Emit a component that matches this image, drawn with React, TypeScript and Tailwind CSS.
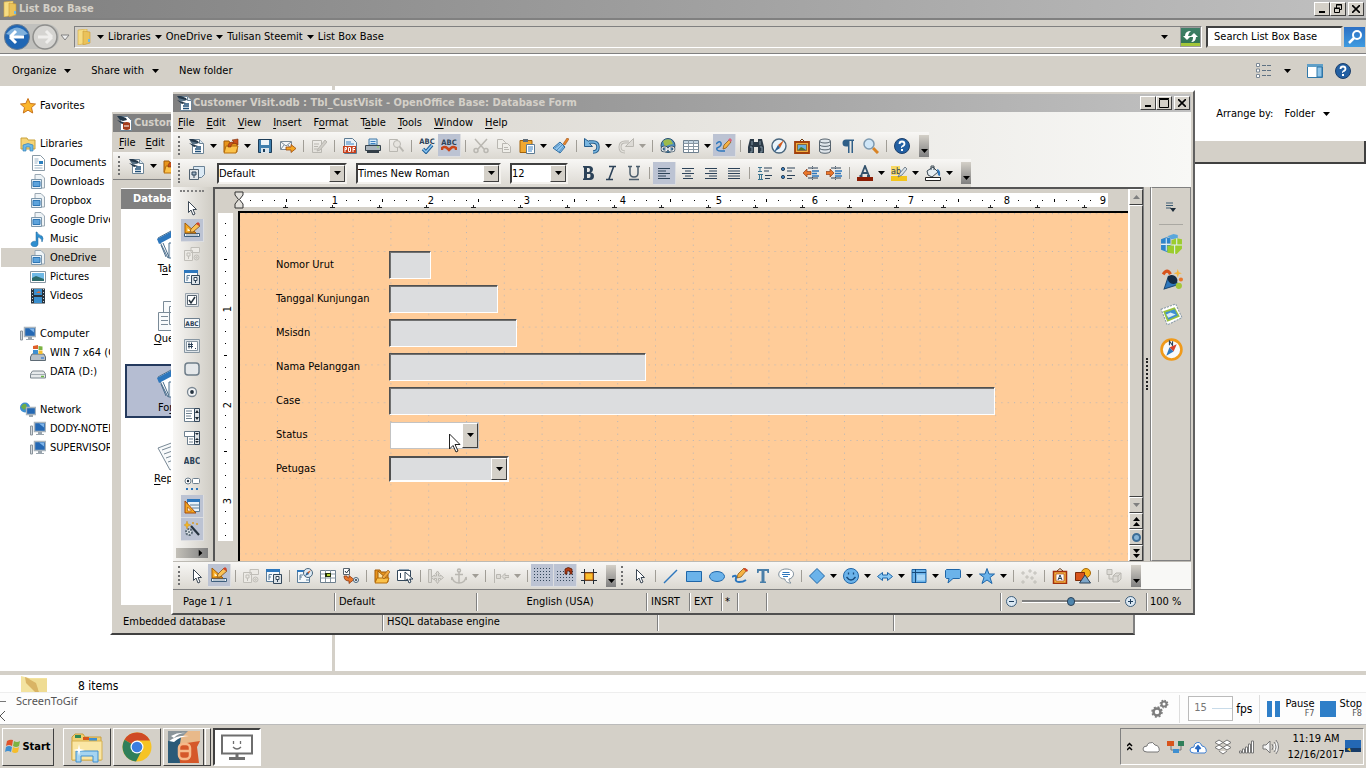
import React from "react";

const blue = "#3b82c4";
const navy = "#2c4258";
const faded = "#b9b7b1";

// 16x16 glyphs used by the toolbars
const icons: Record<string, React.ReactNode> = {
  doc: (
    <>
      <path d="M3.500 1.500h7l4 4v10h-11z" fill="#fff" stroke="#6d8496" />
      <path d="M0 1h4l5 2 1 2-4 1-3-1z M0 5l6 2 3 1-4 1z" fill="#24384a" />
      <path d="M1 3l8 2-5 2z" fill="#5b7488" />
      <path d="M7 9h5M6 11h6M6 13.500h6" stroke="#1f4f78" strokeWidth="1.300" />
      <path d="M10.500 1.500v4h4" fill="#dce8f1" stroke="#6d8496" />
    </>
  ),
  base: (
    <>
      <path d="M3.500 1.500h7l4 4v10h-11z" fill="#fff" stroke="#6d8496" />
      <path d="M0 1h4l5 2 1 2-4 1-3-1z M0 5l6 2 3 1-4 1z" fill="#24384a" />
      <path d="M6 8q4-2 7 0v6q-3 2-7 0z" fill="#a33c1b" />
      <path d="M7 11h5" stroke="#fff" />
    </>
  ),
  open: (
    <>
      <path d="M1 3h5l1 2h7v9H1z" fill="#e8951c" stroke="#a25a06" />
      <path d="M3 8h12l-2 7H1z" fill="#fbc24a" stroke="#b66d0b" />
      <path d="M5 9c0-4 2-5 6-5L9 2l6-1v6l-2-1.500c-4-.5-5 1-5 3.500z" fill="#c9501a" stroke="#7a2f0b" strokeWidth=".6" />
    </>
  ),
  save: (
    <>
      <path d="M1.500 1.500h13v13h-13z" fill="#3f7fae" stroke="#1c3c58" />
      <path d="M4 2h8v5H4z" fill="#eef4f8" />
      <path d="M4 10h8v5H4z" fill="#dbe5ec" />
      <path d="M6 11h2v3H6z" fill="#1c3c58" />
    </>
  ),
  mail: (
    <>
      <path d="M.5 3.500h11v8H.5z" fill="#f4f7fa" stroke="#7a8a97" />
      <path d="M1 4l5 4 5-4M1 11l3-4M11 11L8 7" stroke="#7a8a97" fill="none" />
      <path d="M6 9h5V6.500l5 4-5 4V12H6z" fill="#f5a623" stroke="#9c4a0c" strokeWidth=".8" />
    </>
  ),
  edit: (
    <g stroke={faded} fill="none">
      <path d="M1.500 2.500h9v12h-9zM3 6h5M3 8.500h4M3 11h4" />
      <path d="M7 11L14 2l2 2-7 8-3 1z" fill="#d0cec8" />
    </g>
  ),
  pdf: (
    <>
      <path d="M2.500.5h8l4 4v11h-12z" fill="#eaf2f8" stroke="#5d7b93" />
      <path d="M4 4h5M4 6h8" stroke="#3b82c4" />
      <path d="M1 8h13v7H1z" fill="#c8401c" />
      <path d="M3 14V9.500h1.500v2H3M6.500 9.500v4h2v-4zM11 14V9.500h2M11 11.500h2" stroke="#fff" fill="none" />
    </>
  ),
  print: (
    <>
      <path d="M4 1h8v6H4z" fill="#d9ebf8" stroke="#3f78a8" />
      <path d="M5.500 3.500h5M5.500 5.500h5" stroke="#3b82c4" />
      <path d="M.5 7.500h15v5H.5z" fill="#aab4bc" stroke="#36434d" />
      <path d="M2 12h12v3H2z" fill="#333e47" />
      <path d="M12 9h2" stroke="#8ee05a" />
    </>
  ),
  preview: (
    <g stroke={faded} fill="none">
      <path d="M1.500 1.500h8v12h-8z" />
      <circle cx="9" cy="6" r="3.500" fill="#e6e4df" />
      <path d="M11.500 8.500l4 5" strokeWidth="2" />
    </g>
  ),
  check: (
    <>
      <text x="8" y="6" fontSize="7.500" fontWeight="bold" textAnchor="middle" fill={navy}>ABC</text>
      <path d="M4 11l3 3 6-7" fill="none" stroke="#1d5f99" strokeWidth="3.500" />
      <path d="M4 11l3 3 6-7" fill="none" stroke="#8cc6f2" strokeWidth="1.500" />
    </>
  ),
  abc: (
    <>
      <text x="8" y="8" fontSize="7.500" fontWeight="bold" textAnchor="middle" fill={navy}>ABC</text>
      <path d="M1 13v-2q3-2 5 0l2 2 2-2q2-2 5 0v2" fill="none" stroke="#c9461a" strokeWidth="2.500" />
    </>
  ),
  cut: (
    <g stroke={faded} fill="none" strokeWidth="1.500">
      <path d="M2 1l9 10M14 1L5 11" />
      <circle cx="3" cy="12.500" r="2" />
      <circle cx="13" cy="12.500" r="2" />
    </g>
  ),
  copy: (
    <g stroke={faded} fill="#efeee9">
      <path d="M1.500 1.500h5l3 3v6h-8z" />
      <path d="M6.500 5.500h5l3 3v6h-8z" />
      <path d="M8 9.500h4M8 11.500h5" />
    </g>
  ),
  paste: (
    <>
      <path d="M1 2.500h12v12H1z" fill="#f0a830" stroke="#a3630b" />
      <path d="M4 1h5v3H4z" fill="#5c6b78" />
      <path d="M7.500 6.500h8v9h-8z" fill="#fff" stroke="#5d7b93" />
      <path d="M9 9h5M9 11h5M9 13h4" stroke={blue} />
    </>
  ),
  brush: (
    <>
      <path d="M10 6l4-6 2 1-4 6z" fill="#e8862a" stroke="#8d430a" strokeWidth=".5" />
      <path d="M7 4l5 5-5 6-7-5z" fill="#8fc4ec" stroke="#2d6da3" />
      <path d="M2 10l5-4M4 12l5-5M6 14l5-6" stroke="#2d6da3" strokeWidth=".6" />
    </>
  ),
  undo: (
    <>
      <path d="M5 4h4q5 0 5 5t-5 5" fill="none" stroke="#255d8c" strokeWidth="3.500" />
      <path d="M.5.5v8h8L5.500 5.500l1.500-2-3-.5z" fill="#7ab6e0" stroke="#255d8c" />
      <path d="M5 4h4q5 0 5 5t-5 5" fill="none" stroke="#7ab6e0" strokeWidth="1.500" />
    </>
  ),
  redo: (
    <>
      <path d="M11 4H7Q2 4 2 9t5 5" fill="none" stroke={faded} strokeWidth="3" />
      <path d="M11 4H7Q2 4 2 9t5 5" fill="none" stroke="#e4e2dd" strokeWidth="1.200" />
      <path d="M15.500.5v8h-8l3-3z" fill="#dddbd6" stroke={faded} />
    </>
  ),
  globe: (
    <>
      <circle cx="8" cy="7.500" r="7" fill="#4d8fc0" stroke="#29506f" />
      <path d="M3 3q4-3 8-1l2 4-5 1-3 2z" fill="#9dbb4a" />
      <g fill="none" stroke="#34495a" strokeWidth="2.600">
        <rect x="2" y="9" width="5" height="4" rx="2" />
        <rect x="9" y="9" width="5" height="4" rx="2" />
      </g>
      <g fill="none" stroke="#f2f5f7" strokeWidth="1.200">
        <rect x="2" y="9" width="5" height="4" rx="2" />
        <rect x="9" y="9" width="5" height="4" rx="2" />
        <path d="M5 11h6" />
      </g>
    </>
  ),
  table: (
    <>
      <path d="M.5 2.500h15v12H.5z" fill="#fff" stroke="#6d7f8e" />
      <path d="M1 3h14v2H1z" fill="#c4d5e2" />
      <path d="M.5 5.500h15M.5 8.500h15M.5 11.500h15M5.500 2v12M10.500 2v12" stroke="#8796a2" />
    </>
  ),
  draw: (
    <>
      <path d="M0 7q4-4 5-1t-4 5q-1 3 4 3h4" fill="none" stroke="#2d77bd" strokeWidth="1.500" />
      <path d="M7 12l1-4 5-5 2 2-5 6z" fill="#f6b244" stroke="#8d5a14" strokeWidth=".8" />
      <path d="M12 3l2-2 2 2-1 2z" fill="#d8657a" />
    </>
  ),
  find: (
    <>
      <path d="M2 1h4v3h4V1h4l2 8v6h-6V9H6v6H0V9z" fill="#2b3a47" />
      <path d="M2 9h2v5H2M12 9h2v5h-2M4 3v4M12 3v4" stroke="#8497a6" fill="none" />
    </>
  ),
  compass: (
    <>
      <circle cx="8" cy="8" r="7" fill="#eaf4fb" stroke="#49657c" strokeWidth="1.400" />
      <path d="M13 2L9 10 7 7z" fill="#d35a1d" />
      <path d="M3 14l4-7 2 3z" fill="#2b5f93" />
    </>
  ),
  gallery: (
    <>
      <path d="M5 4l3-3 3 3" stroke="#6b3a10" fill="none" />
      <path d="M1 4h14v11H1z" fill="#f0b040" stroke="#a3400c" strokeWidth="1.800" />
      <path d="M3.500 6.500h9v6h-9z" fill="#6bb0dd" stroke="#6b3a10" strokeWidth=".6" />
      <path d="M4 12l3-3 2 1 3 2z" fill="#4b7b2a" />
    </>
  ),
  db: (
    <g fill="#dfe5ea" stroke="#56636e">
      <path d="M2.500 3v10c0 3 11 3 11 0V3" />
      <ellipse cx="8" cy="3" rx="5.500" ry="2" />
      <path d="M2.500 6.500c0 2.500 11 2.500 11 0M2.500 10c0 2.500 11 2.500 11 0" fill="none" />
    </g>
  ),
  para: <path d="M14 1.500H6a3.500 3.500 0 0 0 0 7h2V15h1.500V3h2v12H13V3h1z" fill="#2f5f88" />,
  zoom: (
    <>
      <path d="M10 10l5 5" stroke="#d98324" strokeWidth="3" />
      <circle cx="6" cy="6" r="5" fill="#cfe6f7" stroke="#7c99b0" strokeWidth="1.500" />
    </>
  ),
  help: (
    <>
      <circle cx="8" cy="8" r="7.500" fill="#2360a3" stroke="#1c3f6b" />
      <path d="M5.500 6q0-2.500 2.500-2.500T10.500 6q0 1-1.500 2T8 9.500" fill="none" stroke="#fff" strokeWidth="1.800" />
      <path d="M7 11h2v2H7z" fill="#fff" />
    </>
  ),
  styles: (
    <>
      <path d="M4.500 1.500h11v8l-3 3h-8z" fill="#dbe9f4" stroke="#6b8296" />
      <path d="M.5 4.500h9v10h-9z" fill="#e3e6e8" stroke="#526270" />
      <path d="M3 7h4v3H3zM5 10v3" stroke="#2c4258" fill="#9fb4c4" />
    </>
  ),
  bold: <path d="M3 1h6q4 0 4 3.500 0 2-2 3 3 .5 3 3.500 0 4-4 4H3v-1.500h1v-11H3zM7 3v4h1.500Q10 7 10 5T8.500 3zm0 6v4h2q1.500 0 1.500-2T10 9z" fill={navy} fillRule="evenodd" />,
  italic: <path d="M6 1.500h7M3 14.500h7M10.500 2L6 14" stroke={navy} strokeWidth="1.600" />,
  underline: <path d="M2 1.500h4M10 1.500h4M4 2v6q0 4 4 4t4-4V2M3 14.500h10" fill="none" stroke="#4b5d6c" strokeWidth="1.500" />,
  left: <path d="M2 3.500h12M2 6h8M2 8.500h12M2 11h8M2 13.500h12" stroke={navy} />,
  center: <path d="M2 3.500h12M5 6h6M2 8.500h12M5 11h6M3 13.500h10" stroke={navy} />,
  right: <path d="M2 3.500h12M6 6h8M2 8.500h12M6 11h8M2 13.500h12" stroke={navy} />,
  justify: <path d="M2 3.500h12M2 6h12M2 8.500h12M2 11h12M2 13.500h12" stroke={navy} />,
  numbers: (
    <>
      <path d="M1 2.500h4M3 3v3M1 6.500h4M1 9.500h5M2.500 10v4M4.500 10v4M1 14.500h5" stroke="#3c7590" />
      <path d="M7 3h8M7 6h5M8 10.500h7M8 13.500h5" stroke={navy} />
    </>
  ),
  bullets: (
    <>
      <circle cx="3" cy="4" r="1.600" fill={blue} stroke={navy} />
      <circle cx="3" cy="12" r="1.600" fill={blue} stroke={navy} />
      <path d="M7 3h8M7 6h5M7 10.500h8M7 13.500h5" stroke={navy} />
    </>
  ),
  outdent: (
    <>
      <path d="M9.500 1v3M9.500 12v3" stroke="#526270" strokeDasharray="1 1" />
      <path d="M5 3h10M5 13h10" stroke={navy} />
      <path d="M9 6h7M9 8.500h5M9 11h7" stroke="#2d77bd" strokeWidth="1.500" />
      <path d="M0 8l4-4v2.500h4v3H4V12z" fill="#e9762a" stroke="#7d2c08" strokeWidth=".6" />
    </>
  ),
  indent: (
    <>
      <path d="M9.500 1v3M9.500 12v3" stroke="#526270" strokeDasharray="1 1" />
      <path d="M5 3h10M5 13h10" stroke={navy} />
      <path d="M9 6h7M9 8.500h6M9 11h7" stroke="#2d77bd" strokeWidth="1.500" />
      <path d="M8 8L4 4v2.500H0v3h4V12z" fill="#e9762a" stroke="#7d2c08" strokeWidth=".6" />
    </>
  ),
  color: (
    <>
      <path d="M4 11L8 1l4 10M5.500 8h5M2.500 11h3M10 11h3" fill="none" stroke="#33526c" strokeWidth="1.800" />
      <path d="M0 12h16v4H0z" fill="#8c1d04" />
    </>
  ),
  highlight: (
    <>
      <path d="M0 11h16v5H0z" fill="#f3c51c" />
      <path d="M0 1h9v9H0z" fill="#f7d864" />
      <text x="0" y="9" fontSize="9" fill={navy}>ab</text>
      <path d="M7 12l2-4 5-6 2 2-5 6z" fill="#d9e2e9" stroke="#5a6a77" strokeWidth=".8" />
    </>
  ),
  bucket: (
    <>
      <path d="M2 6l6-4 5 5-6 5-4-2z" fill="#e6edf2" stroke="#3c4a55" />
      <path d="M6 5V1h3v4" fill="none" stroke="#3c4a55" />
      <path d="M12 4q4 1 3 7-1 0-2-1z" fill="#2d77bd" />
      <path d="M.5 12.500h15v3H.5z" fill="#fff" stroke="#222" />
    </>
  ),
  pointer: <path d="M4.500 1.500v11l2.500-2.500 2 5 2-1-2-4.500h3.500z" fill="#fff" stroke="#3b4754" />,
  design: (
    <>
      <path d="M.5 11.500h15v3H.5z" fill="#eef3f7" stroke="#3e5f7d" />
      <path d="M3 12v2M5 12v2M7 12v2M9 12v2M11 12v2M13 12v2" stroke="#3e5f7d" strokeWidth=".6" />
      <path d="M1 1v10h11z" fill="#f5a81f" stroke="#a35c08" />
      <path d="M3.500 6v3h3z" fill="#fff4d6" />
      <path d="M6 10l1-3 6-6 3 3-7 6z" fill="#f9c155" stroke="#84501a" strokeWidth=".8" />
      <path d="M12 2l2-2 2 2-1 2z" fill="#d0432a" />
    </>
  ),
  control: (
    <g fill="none" stroke="#c0beb8">
      <path d="M7 1.500h8.500v5H7zM.5 4.500h8v10h-8z" fill="#eceae5" />
      <path d="M3 7h3v3H3zM4.500 10v3" />
      <circle cx="12.500" cy="11.500" r="2.500" />
      <circle cx="12.500" cy="11.500" r=".8" />
    </g>
  ),
  form: (
    <>
      <path d="M.5 1.500h13v12H.5z" fill="#f5f9fc" stroke="#5b7c99" />
      <path d="M0 1h14v3H0z" fill="#2d77bd" />
      <path d="M3 12V6.500h3M3 9h2" stroke="#5b7c99" fill="none" />
      <path d="M7.500 6.500h8v9h-8z" fill="#dce3e8" stroke="#33475a" />
      <path d="M10 8.500h3v3h-3zM11.500 12v2" stroke="#33475a" fill="#fff" />
    </>
  ),
  checkbox: (
    <>
      <path d="M1.500 1.500h13v13h-13z" fill="#e4e7ea" stroke="#9aa5ae" />
      <path d="M3.500 3.500h9v9h-9z" fill="#fff" stroke="#56636e" />
      <path d="M5 8l2 3 4-6" fill="none" stroke="#23313d" strokeWidth="1.500" />
    </>
  ),
  textbox: (
    <>
      <path d="M.5 3.500h15v9H.5z" fill="#f4f6f8" stroke="#6d7f8e" />
      <text x="8" y="11" fontSize="6.500" fontWeight="bold" textAnchor="middle" fill={navy}>ABC</text>
    </>
  ),
  numeric: (
    <>
      <path d="M.5 1.500h15v13H.5z" fill="#dfe5e9" stroke="#8796a2" />
      <path d="M2.500 3.500h11v9h-11z" fill="#fff" stroke="#8796a2" />
      <path d="M5 4.500v6M7.500 4.500v6M4 6.500h5M4 8.500h5M11 10.500h1" stroke={navy} />
    </>
  ),
  pushbutton: <rect x="1" y="2" width="14" height="12" rx="3" fill="#e5e8ea" stroke="#6e7d89" strokeWidth="1.500" />,
  radio: (
    <>
      <circle cx="8" cy="8" r="4.500" fill="#f2f4f6" stroke="#7a8792" strokeWidth="1.300" />
      <circle cx="8" cy="8" r="1.900" fill="#26333f" />
    </>
  ),
  listbox: (
    <>
      <path d="M.5 1.500h10v13H.5z" fill="#fff" stroke="#6d7f8e" />
      <path d="M2 4h6M2 6.500h6M2 9h5M2 11.500h6" stroke="#6d7f8e" />
      <path d="M10.500 1.500h5v13h-5z" fill="#dfe3e6" stroke="#33475a" />
      <path d="M13 3l2 3h-4zM13 13l2-3h-4z" fill="#1d2730" />
    </>
  ),
  combobox: (
    <>
      <path d="M.5 1.500h10v5H.5zM3.500 6.500h7v8h-7z" fill="#fff" stroke="#6d7f8e" />
      <path d="M5 9h4M5 12h4" stroke="#6d7f8e" />
      <path d="M10.500 1.500h5v13h-5z" fill="#dfe3e6" stroke="#33475a" />
      <path d="M11 3h4l-2 2zM13 8l2 2h-4zM13 13l2-2h-4z" fill="#1d2730" />
    </>
  ),
  label: <text x="8" y="11" fontSize="8" fontWeight="bold" textAnchor="middle" fill={navy}>ABC</text>,
  more: (
    <>
      <circle cx="4" cy="5" r="3" fill="#fff" stroke="#6d7f8e" />
      <circle cx="4" cy="5" r="1.200" fill="#26333f" />
      <rect x="8.500" y="2.500" width="7" height="5" rx="1" fill="#fff" stroke="#6d7f8e" />
      <path d="M2 13h2M7 13h2M12 13h2" stroke="#2d77bd" strokeWidth="2" />
    </>
  ),
  designForm: (
    <>
      <path d="M3.500 1.500h12v12h-12z" fill="#e7f1f9" stroke="#5b7c99" />
      <path d="M3 1h13v3H3z" fill="#2d77bd" />
      <path d="M6 7h9M8 10h7" stroke="#5b7c99" />
      <path d="M1 3v12h11z" fill="#f5a81f" stroke="#a3480c" />
      <path d="M3.500 9v4h4z" fill="#fff4d6" stroke="#a3480c" strokeWidth=".6" />
    </>
  ),
  wizard: (
    <>
      <path d="M7 5l8 9" stroke="#26333f" strokeWidth="2.200" />
      <circle cx="5" cy="11" r="3" fill="#dfe5e9" stroke="#5d6c78" strokeWidth="2" strokeDasharray="2 1" />
      <circle cx="5" cy="11" r="1" fill="#5d6c78" />
      <path d="M3 0l1 3 3 1-3 1-1 3-1-3-2-1 2-1zM9 1l1 1-1 1-1-1zM13 2l1 1-1 1-1-1z" fill="#f3b61e" stroke="#c8851a" strokeWidth=".4" />
    </>
  ),
  navigator: (
    <>
      <path d="M.5 2.500h12v12H.5z" fill="#f5f9fc" stroke="#5b7c99" />
      <path d="M0 2h9v2H0z" fill="#2d77bd" />
      <path d="M3 12V7h3M3 9h2M9 12h3" stroke="#5b7c99" fill="none" />
      <circle cx="11" cy="5" r="4.500" fill="#dceaf5" stroke="#49657c" />
      <path d="M14 2l-2.500 4-1.500-1.500z" fill="#d35a1d" />
      <path d="M8 8l2-4 2 2z" fill="#2b5f93" />
    </>
  ),
  field: (
    <>
      <path d="M.5 2.500h15v12H.5z" fill="#fff" stroke="#6d7f8e" />
      <path d="M.5 6h15M.5 10h15M5.500 2v12M10.500 2v12" stroke="#8796a2" />
      <path d="M5 5h6v4H5z" fill="#24330c" />
      <path d="M7 6h3v2H7z" fill="#b5d334" />
    </>
  ),
  order: (
    <>
      <path d="M.5.5h6v6h-6z" fill="#fff" stroke="#56636e" />
      <path d="M2 3l1.500 2 3-4" fill="none" stroke="#23313d" />
      <path d="M1 8q0 5 5 5v2.500l5-4-5-4V10Q4 10 4 8z" fill="#e9762a" stroke="#7d2c08" strokeWidth=".7" />
      <circle cx="13" cy="12" r="2.500" fill="#eef3f7" stroke="#49657c" />
      <circle cx="13" cy="12" r="1" fill="#26333f" />
    </>
  ),
  openDesign: (
    <>
      <path d="M1 2h5l1 2h7v10H1z" fill="#e8951c" stroke="#a25a06" />
      <path d="M4 3l9 8H4z" fill="#fbe3a5" stroke="#a25a06" />
      <path d="M3 10h12l-2 5H1z" fill="#fbc24a" stroke="#b66d0b" />
      <path d="M8 9l6-7 2 2-6 7z" fill="#f1a73c" stroke="#84501a" strokeWidth=".6" />
    </>
  ),
  autofocus: (
    <>
      <path d="M.5 2.500h13v10H.5z" fill="#fff" stroke="#33475a" />
      <path d="M3.500 5v5" stroke={navy} />
      <path d="M2 1.500h10" stroke="#8aa0b3" />
      <path d="M8 4v9l2.500-2 1.500 4 2-1-1.500-3H16z" fill="#fff" stroke="#33475a" />
    </>
  ),
  size: (
    <g stroke={faded} fill="#dddbd6">
      <path d="M.5 1.500h3v13h-3z" />
      <path d="M9.500 3l2 3h-1v2h2V7l3 2.500-3 2.500v-1.500h-2v2h1l-2 3-2-3h1v-2h-2V12L3 9.500 6.500 7v1h2V6h-1z" />
    </g>
  ),
  anchor: (
    <g stroke={faded} fill="none" strokeWidth="1.500">
      <circle cx="8" cy="2.500" r="1.500" />
      <path d="M8 4v11M4 6.500h8M1 9q1 6 7 6t7-6M1 9l-1 3M15 9l1 3" />
    </g>
  ),
  align: (
    <g stroke={faded} fill="#dddbd6">
      <path d="M1.500 1v14" />
      <path d="M3.500 6.500h4v4h-4zM9 8.500l3-3v2h4v2h-4v2z" />
    </g>
  ),
  grid: <path d="M0 1.500h16M0 4.500h16M0 7.500h16M0 10.500h16M0 13.500h16" stroke="#33475a" strokeDasharray="1 2" />,
  snap: (
    <>
      <path d="M0 4.500h16M0 7.500h16M0 10.500h16M0 13.500h16" stroke="#33475a" strokeDasharray="1 2" />
      <path d="M8 7V2q3-3 7 0v5h-2V4h-3v3z" fill="#b33a12" stroke="#5a1d08" strokeWidth=".8" />
    </>
  ),
  guides: (
    <>
      <path d="M3.500 1v15M12.500 1v15M0 4.500h16M0 12.500h16" stroke="#222c36" />
      <path d="M4 5h8v7H4z" fill="#fbc02d" stroke="#c05a0c" />
    </>
  ),
  line: <path d="M1 15L14 2" stroke="#2d77bd" strokeWidth="1.500" />,
  rect: <path d="M.5 3.500h15v10H.5z" fill="#6bb3ea" stroke="#1f66a8" />,
  ellipse: <ellipse cx="8" cy="8.500" rx="7.500" ry="5" fill="#6bb3ea" stroke="#1f66a8" />,
  freehand: (
    <>
      <path d="M0 9q5-3 4 1t3 4 7-2" fill="none" stroke="#2d77bd" strokeWidth="2" />
      <path d="M5 10l1-4 6-6 3 2-6 7z" fill="#f6b244" stroke="#8d5a14" strokeWidth=".8" />
      <path d="M11 1l2-1 3 2-1 2z" fill="#d0432a" />
    </>
  ),
  text: <path d="M2 1h12v4h-1.500L12 3H9.500v10.500H11V15H5v-1.500h1.500V3H4l-.5 2H2z" fill="#4a7fa9" />,
  callout: (
    <>
      <path d="M8 1c10 0 9 9 3 10 0 2 1 3 2 4-4 0-6-2-6-4C-2 11-1 1 8 1z" fill="#fff" stroke="#7c8d9a" />
      <path d="M4.500 4.500h7M4 6.500h8M5 8.500h5" stroke="#2d77bd" />
    </>
  ),
  diamond: <path d="M8 .5L15.500 8 8 15.500.5 8z" fill="#6bb3ea" stroke="#1f66a8" />,
  smile: (
    <>
      <circle cx="8" cy="8" r="7.500" fill="#6bb3ea" stroke="#1f66a8" />
      <path d="M5.500 4.500v2M10.500 4.500v2M3.500 9q4.500 6 9 0" fill="none" stroke="#174a7c" strokeWidth="1.300" />
    </>
  ),
  arrows: <path d="M.5 8.500l5-4v2.500h5V4.500l5 4-5 4V10h-5v2.500z" fill="#8ccaf5" stroke="#1f66a8" />,
  flow: (
    <>
      <path d="M1 1.500h14v13H1z" fill="#6bb3ea" stroke="#1f66a8" />
      <path d="M4.500 1v14M1 4.500h14" stroke="#174a7c" />
      <path d="M6 6.500h8v6H6z" fill="#a7d4f5" />
    </>
  ),
  bubble: <path d="M1.500 1.500h13q1 0 1 1v7l-1 1H8L3 15l1-4.500H1.500l-1-1v-7z" fill="#6bb3ea" stroke="#1f66a8" />,
  star: <path d="M8 .5l2 5.500h5.500L11 9.500l2 6-5-3.500-5 3.500 2-6L.5 6H6z" fill="#6bb3ea" stroke="#1f66a8" />,
  points: (
    <g fill="none" stroke={faded}>
      <path d="M1 13h2v2H1zM1 4h2v2H1zM5 8h2v2H5zM8 2h2v2H8zM13 4h2v2h-2zM10 9h2v2h-2zM13 13h2v2h-2z" strokeWidth=".8" />
    </g>
  ),
  fontwork: (
    <>
      <path d="M5 3l3-2.500L11 3" stroke="#6b3a10" fill="none" />
      <path d="M1.500 3.500h13v12h-13z" fill="#f0b040" stroke="#a3300c" strokeWidth="1.500" />
      <path d="M4 6h8v7H4z" fill="#fff" stroke="#a3300c" strokeWidth=".6" />
      <path d="M6 12l2-5 2 5M6.500 10.500h3" stroke={navy} fill="none" />
    </>
  ),
  shapes: (
    <>
      <circle cx="11" cy="5" r="4.500" fill="#f6b21c" stroke="#a8690a" />
      <path d="M.5 4.500h9v8h-9z" fill="#d8541c" stroke="#7d2c08" />
      <path d="M10 7l5.500 8h-11z" fill="#7da6c9" stroke="#2c4258" />
    </>
  ),
  extrude: (
    <g fill="#dddbd6" stroke={faded}>
      <path d="M1 1.500h5v5H1zM3 7v4h4" />
      <path d="M7 8l3-3h5v6l-3 3H7zM7 8h5v6M12 8l3-3" />
    </g>
  ),
  // explorer tree
  favorites: <path d="M8 .5l2.200 5 5.300.5-4 3.600 1.200 5.400L8 12.200 3.300 15l1.200-5.400-4-3.600 5.300-.5z" fill="#fbb62c" stroke="#c9731a" />,
  libraries: (
    <>
      <path d="M1 2h6l1 2h7v9H1z" fill="#f6d477" stroke="#c9a23c" />
      <path d="M3 15V9q5-3 10 0v6h-3v-4H6v4z" fill="#6bb8e8" stroke="#3881b5" strokeWidth=".7" />
    </>
  ),
  documents: (
    <>
      <path d="M2.500.5h8l4 4v11h-12z" fill="#fff" stroke="#8a9aa6" />
      <path d="M4.500 4h4M4.500 6h4M4.500 8h3M4.500 10.500h8M4.500 13h8" stroke="#9db4c5" />
      <path d="M9 6h4v3H9z" fill="#2b7fbe" />
    </>
  ),
  stack: (
    <>
      <path d="M5 .5h6l3.500 3.500v10H5z" fill="#eef3f6" stroke="#9aa8b3" />
      <path d="M1.500 5.500h10v9h-10z" fill="#e8f1f8" stroke="#7c96aa" />
      <path d="M3 7.500h7v5H3z" fill="#5da3dc" stroke="#2f77b5" />
    </>
  ),
  music: <path d="M7 1q1 3 5 4 2 2 0 6 0-4-4-5v7a3.500 2.800 0 1 1-2-2.500V1z" fill="#2f8fd0" stroke="#1d659b" strokeWidth=".5" />,
  pictures: (
    <>
      <path d="M.5 2.500h15v11H.5z" fill="#fff" stroke="#8796a2" />
      <path d="M2 4h12v8H2z" fill="#6fb9e6" />
      <path d="M2 9l4-2 8 3v2H2z" fill="#2c6b6b" />
    </>
  ),
  videos: (
    <>
      <path d="M1 .5h14v15H1z" fill="#27333d" />
      <path d="M4 1h8v6H4zM4 9h8v6H4z" fill="#3a8fce" />
      <path d="M2.500 1v15M13.500 1v15" stroke="#c9d3da" strokeDasharray="1 2" />
      <path d="M6 5l3-2 2 2z" fill="#d8683a" />
    </>
  ),
  computer: (
    <>
      <path d="M4.500 1.500h11v9h-11z" fill="#2468b4" stroke="#a9b4bd" strokeWidth="1.500" />
      <path d="M9 2.500h5v4z" fill="#7db4ea" />
      <path d="M8 11h4v2h2v1H6v-1h2z" fill="#9aa5ae" />
      <path d="M.5 5h2v9h-2z" fill="#d5dade" stroke="#8a949c" />
    </>
  ),
  windrive: (
    <>
      <path d="M2 9h12l1.500 3v3.500H.5V12z" fill="#b8c0c6" stroke="#5d6a74" />
      <path d="M3 1l5-1v4H3z" fill="#e0602a" />
      <path d="M8.500 1l4 .5V5h-4z" fill="#7cb342" />
      <path d="M3 5h5v4H3z" fill="#3f8fd0" />
      <path d="M8.500 5.500h4V9h-4z" fill="#f5bd2c" />
      <path d="M11 13h3" stroke="#4b89d6" strokeWidth="1.500" />
    </>
  ),
  drive: (
    <>
      <path d="M2.500 7h11l2 3v4H.5v-4z" fill="#e6e9eb" stroke="#7b858d" />
      <path d="M.5 10.500h15" stroke="#a3abb1" />
      <path d="M11 12.500h3" stroke="#6bb84a" strokeWidth="1.500" />
    </>
  ),
  network: (
    <>
      <circle cx="5" cy="5.500" r="5" fill="#3f8fd0" />
      <path d="M1 5q2-4 5-3l1 3-3 3z" fill="#6fae45" />
      <path d="M6.500 5.500h9v7h-9z" fill="#2468b4" stroke="#a9b4bd" strokeWidth="1.300" />
      <path d="M9 13h4v2H9z" fill="#9aa5ae" />
    </>
  ),
  folder: (
    <>
      <path d="M2 1l9-1v14l-9 2z" fill="#f6dc83" stroke="#d3a93f" strokeWidth=".6" />
      <path d="M7 2l7 1v11l-7 2z" fill="#eac25a" stroke="#c99a34" strokeWidth=".6" />
      <path d="M12 10h2v3h-2z" fill="#6fb9e6" />
    </>
  ),
};

const Icon = ({ name, className = "h-4 w-4" }: { name: string; className?: string }) => (
  <svg viewBox="0 0 16 16" className={`${className} shrink-0`} aria-hidden="true">
    {icons[name]}
  </svg>
);

const Caret = ({ className = "text-black" }: { className?: string }) => (
  <svg width="7" height="4" viewBox="0 0 7 4" className={`shrink-0 ${className}`} aria-hidden="true">
    <path d="M0 0h7L3.500 4z" fill="currentColor" />
  </svg>
);

const Grip = () => (
  <div className="flex w-3 shrink-0 justify-center self-stretch py-1">
    <div className="w-0 border-l-2 border-dotted border-[#707070]" />
  </div>
);

const Divider = () => <span className="h-[18px] w-[2px] shrink-0 border-l border-r border-l-[#808080] border-r-white" />;

const Overflow = () => (
  <button
    aria-label="More buttons"
    className="flex h-[22px] w-[10px] shrink-0 items-end justify-center bg-linear-to-b from-[#d4d0c8] to-[#808080] pb-1"
  >
    <Caret />
  </button>
);

// "|" is a separator, "v" a drop arrow, "u" a greyed drop arrow, "+name" a pressed button
const Tools = ({ items }: { items: string[] }) => (
  <>
    {items.map((item, idx) => {
      if (item === "|")
        return (
          <span key={idx} className="flex w-2 shrink-0 justify-center">
            <span className="h-3 w-px bg-[#a09d96]" />
          </span>
        );
      if (item === "v" || item === "u")
        return (
          <button key={idx} aria-label="Open list" className="flex h-[22px] w-[11px] shrink-0 items-center justify-center">
            <Caret className={item === "u" ? "text-[#a09d96]" : "text-black"} />
          </button>
        );
      const pressed = item.startsWith("+");
      const name = pressed ? item.slice(1) : item;
      return (
        <button
          key={idx}
          aria-label={name}
          className={
            pressed
              ? "flex h-[23px] w-[23px] shrink-0 items-center justify-center border-r border-b border-[#dcdde0] bg-[#bcc3d3]"
              : "flex h-[23px] w-[23px] shrink-0 items-center justify-center"
          }
        >
          <Icon name={name} />
        </button>
      );
    })}
  </>
);

const raised =
  "border border-t-white border-l-white border-b-[#404040] border-r-[#404040] bg-[#d4d0c8]";

const WindowButtons = ({ restore = false }: { restore?: boolean }) => (
  <div className="flex shrink-0">
    <button aria-label="Minimize" className={`flex h-[14px] w-4 items-end justify-center pb-[2px] ${raised}`}>
      <span className="h-[2px] w-[6px] bg-black" />
    </button>
    <button aria-label={restore ? "Restore" : "Maximize"} className={`flex h-[14px] w-4 items-center justify-center ${raised}`}>
      <svg width="10" height="10" viewBox="0 0 10 10" fill="none" stroke="#000">
        {restore ? (
          <path d="M3.500 5V.5h5v5H7M3 1h6M1.500 4.500h5v4h-5zM1 4h6" />
        ) : (
          <path d="M.5 1.500h9v8h-9zM0 .5h10" />
        )}
      </svg>
    </button>
    <button aria-label="Close" className={`ml-[2px] flex h-[14px] w-4 items-center justify-center ${raised}`}>
      <svg width="8" height="8" viewBox="0 0 8 8" stroke="#000" strokeWidth="1.600">
        <path d="M0 0l8 8M8 0L0 8" />
      </svg>
    </button>
  </div>
);

// The letter after "_" is the access key
const Access = ({ text }: { text: string }) => {
  const at = text.indexOf("_");
  return (
    <>
      {text.slice(0, at)}
      <span className="underline underline-offset-2">{text[at + 1]}</span>
      {text.slice(at + 2)}
    </>
  );
};

const tree = [
  [{ name: "Favorites", icon: "favorites" }],
  [
    { name: "Libraries", icon: "libraries" },
    { name: "Documents", icon: "documents" },
    { name: "Downloads", icon: "stack" },
    { name: "Dropbox", icon: "stack" },
    { name: "Google Drive", icon: "stack" },
    { name: "Music", icon: "music" },
    { name: "OneDrive", icon: "stack" },
    { name: "Pictures", icon: "pictures" },
    { name: "Videos", icon: "videos" },
  ],
  [
    { name: "Computer", icon: "computer" },
    { name: "WIN 7 x64 (C:)", icon: "windrive" },
    { name: "DATA (D:)", icon: "drive" },
  ],
  [
    { name: "Network", icon: "network" },
    { name: "DODY-NOTEBOOK", icon: "computer" },
    { name: "SUPERVISOR-PC", icon: "computer" },
  ],
];

const Explorer = () => (
  <section className="flex min-h-0 flex-1 flex-col">
    <header className="flex h-[18px] items-center justify-between bg-linear-to-r from-[#808080] to-[#c0c0c0] pr-[2px] pl-[2px]">
      <h1 className="flex items-center gap-px font-bold text-[#d4d0c8]">
        <Icon name="folder" />
        List Box Base
      </h1>
      <WindowButtons restore />
    </header>
    <div className="flex h-9 items-center border-t-2 border-b border-t-[#808080] border-b-[#808080] pr-px pl-1">
      <svg width="70" height="30" viewBox="0 0 70 30" aria-hidden="true">
        <rect x="0" y="2" width="55" height="25" rx="12" fill="#c0c0bd" />
        <circle cx="13" cy="15" r="12.500" fill="#1f66b4" stroke="#637890" />
        <path d="M2 12q11-13 22 0-11 4-22 0z" fill="#7fb0dc" />
        <path d="M6 15l6-6M6 15l6 6M6 15h14" stroke="#fff" strokeWidth="3" />
        <circle cx="41" cy="15" r="12" fill="#d5d4d1" stroke="#8e8e8c" strokeWidth="1.500" />
        <path d="M48 15l-6-6M48 15l-6 6M48 15H34" stroke="#efeeec" strokeWidth="3" />
        <path d="M57 13h8l-4 5z" fill="#eee" stroke="#808080" />
      </svg>
      <nav className="flex h-[22px] min-w-0 flex-1 items-center border border-t-[#808080] border-r-white border-b-white border-l-[#808080]">
        <Icon name="folder" className="h-4 w-[18px]" />
        {["Libraries", "OneDrive", "Tulisan Steemit", "List Box Base"].map((crumb) => (
          <span key={crumb} className="ml-1 flex items-center gap-1">
            <Caret />
            <a href="#">{crumb}</a>
          </span>
        ))}
        <button aria-label="Previous locations" className="mr-3 ml-auto"><Caret /></button>
        <button aria-label="Refresh" className="border border-[#9a9a9a] bg-linear-to-b from-[#3f7f68] to-[#2f7350]">
          <svg width="19" height="18" viewBox="0 0 19 18">
            <path d="M0 15h19v3H0z" fill="#a4c639" />
            <path d="M2 8l4 4 4-4H7q0-3 3-5-6 0-6 5zM17 9l-4-4-4 4h3q0 4-2 5 5 0 5-5z" fill="#fff" />
          </svg>
        </button>
      </nav>
      <input
        aria-label="Search"
        defaultValue="Search List Box Base"
        className="ml-1 h-[22px] w-[137px] border-2 border-t-[#404040] border-r-[#d4d0c8] border-b-[#d4d0c8] border-l-[#404040] bg-white px-[6px]"
      />
      <button aria-label="Go" className="ml-px flex h-5 w-[21px] items-center justify-center bg-linear-to-b from-[#2d70c4] to-[#3f9be0]">
        <svg width="16" height="16" viewBox="0 0 16 16">
          <circle cx="10" cy="6" r="4" fill="none" stroke="#fff" strokeWidth="2" />
          <path d="M7 9l-5 5" stroke="#fff" strokeWidth="2.500" />
        </svg>
      </button>
    </div>
    <div className="flex h-8 items-center border-t-2 border-white pr-[15px] pl-3">
      <button className="flex items-center gap-2">Organize <Caret /></button>
      <button className="ml-5 flex items-center gap-2">Share with <Caret /></button>
      <button className="ml-5">New folder</button>
      <div className="ml-auto flex items-center">
        <svg width="16" height="16" viewBox="0 0 16 16">
          <path d="M.5.5h3v3h-3zM.5 6h3v3h-3zM.5 11.500h3v3h-3z" fill="#fff" stroke="#7a8794" />
          <path d="M6 2.500h4M11 2.500h4M6 7.500h4M11 7.500h4M6 12.500h4M11 12.500h4" stroke="#5f7283" />
        </svg>
        <button aria-label="View options" className="mx-3"><Caret /></button>
        <svg width="16" height="14" viewBox="0 0 16 14" className="mr-3 ml-1">
          <path d="M.5.500h15v13H.5z" fill="#fff" stroke="#2f77a8" />
          <path d="M0 0h16v3H0z" fill="#5f9fc8" />
          <path d="M10 3h5v10h-5z" fill="#8fc4e8" stroke="#2f77a8" />
        </svg>
        <Icon name="help" />
      </div>
    </div>
    <div className="flex min-h-0 flex-1 bg-white">
      <nav className="w-[332px] shrink-0 overflow-hidden pt-[10px]">
        {tree.map((group) => (
          <ul key={group[0].name} className="mb-[19px]">
            {group.map(({ name, icon }, idx) => (
              <li key={name} className={name === "OneDrive" ? "ml-px bg-[#d4d0c8]" : "ml-px"}>
                <a
                  href="#"
                  className={idx === 0 ? "flex h-[19px] items-center gap-1 pl-[19px]" : "flex h-[19px] items-center gap-1 pl-[29px]"}
                >
                  <Icon name={icon} />
                  {name}
                </a>
              </li>
            ))}
          </ul>
        ))}
      </nav>
      <div className="w-[3px] bg-[#d4d0c8]" />
      <div className="flex flex-1 items-start justify-end gap-[11px] pt-[21px] pr-9">
        <span>Arrange by:</span>
        <button className="flex items-center gap-2">Folder <Caret /></button>
      </div>
    </div>
    <footer className="flex h-[21px] items-end overflow-hidden border-t-4 border-[#d4d0c8] bg-white pl-5">
      <svg width="28" height="16" viewBox="0 0 28 16" className="shrink-0">
        <path d="M1 0l8 2h18v14H1z" fill="#f3e3a0" />
        <path d="M5 1l12 5 2 10h-4L6 7z" fill="#d9b465" />
        <path d="M9 3h18v13h-8l-3-9z" fill="#efdc93" />
      </svg>
      <p className="ml-[30px] text-xs leading-[11px]">8 items</p>
    </footer>
  </section>
);

const objects = ["T_ables", "_Queries", "Fo_rms", "_Reports"];

const BaseWindow = () => (
  <section className="absolute top-[110px] left-[110px] flex h-[525px] w-[1025px] flex-col border-2 border-t-white border-r-[#808080] border-b-[#404040] border-l-white bg-[#d4d0c8] px-px pt-[2px]">
    <header className="flex h-[18px] shrink-0 items-center gap-px bg-[#808080] pl-1 font-bold text-[#d4d0c8]">
      <Icon name="base" /> Customer Visit.odb - OpenOffice Base
    </header>
    <nav className="flex h-5 shrink-0 items-center gap-[10px] pt-[2px] pl-[6px]">
      <button><Access text="_File" /></button>
      <button><Access text="_Edit" /></button>
    </nav>
    <div className="flex h-7 shrink-0 items-center border-b border-[#808080] bg-linear-to-b from-[#f8f7f5] to-[#d4d0c8]">
      <Grip />
      <Tools items={["doc", "v", "open", "v"]} />
    </div>
    <div className="flex min-h-0 flex-1 flex-col pt-2 pl-2">
      <div className="flex min-h-0 w-[104px] flex-1 flex-col bg-white">
        <h2 className="h-[21px] shrink-0 border-t border-white bg-[#808080] pl-3 leading-5 font-bold text-white">Database</h2>
        <ul className="pt-[15px]">
          {objects.map((name) => (
            <li key={name} className="h-[70px]">
              <button
                className={
                  name === "Fo_rms"
                    ? "ml-1 flex h-[54px] w-24 flex-col items-center justify-end border-2 border-[#243a5e] bg-[#b5bdd2] pb-px"
                    : "ml-1 flex h-[54px] w-24 flex-col items-center justify-end pb-[2px]"
                }
              >
                <svg width="32" height="32" viewBox="0 0 32 32">
                  {name === "T_ables" || name === "Fo_rms" ? (
                    <>
                      <path d="M1 8l13-7 8 21-11 6z" fill="#fff" stroke="#4b6e8c" />
                      <path d="M0 9l15-8 2 5L2 14z" fill="#2d77bd" />
                      <path d="M4 15l5 12M6 13l6 14" stroke="#4b6e8c" />
                      <path d="M12 13h14v15H12z" fill="#f4f7fa" stroke="#4b6e8c" />
                      <path d="M14 18h10M14 21h10M14 24h10" stroke="#8aa0b3" />
                    </>
                  ) : name === "_Queries" ? (
                    <g fill="#f8fafb" stroke="#7a8a97">
                      <path d="M6.500 1.500h14v18h-14z" />
                      <path d="M1.500 12.500h14v18h-14zM12.500 6.500h14v18h-14z" />
                      <path d="M4 16.500h7M4 20.500h7M4 24.500h7M15 10.500h7M15 14.500h7" />
                    </g>
                  ) : (
                    <g fill="#f8fafb" stroke="#7a8a97">
                      <path d="M1 8l16-6 10 20-14 8z" />
                      <path d="M5 10l11-4M7 14l11-4M9 18l11-4M11 22l11-4" />
                    </g>
                  )}
                </svg>
                <span><Access text={name} /></span>
              </button>
            </li>
          ))}
        </ul>
      </div>
    </div>
    <footer className="flex h-7 shrink-0 items-center pt-[6px]">
      <span className="w-[269px] pl-[10px]">Embedded database</span>
      <Divider />
      <span className="w-[273px] pl-[3px]">HSQL database engine</span>
      <Divider />
      <span className="w-[234px]" />
      <Divider />
    </footer>
  </section>
);

const PickList = ({ label, value, className }: { label: string; value: string; className: string }) => (
  <div
    className={`flex h-[21px] shrink-0 items-center border-2 border-t-[#404040] border-r-[#f4f2ee] border-b-[#f4f2ee] border-l-[#404040] bg-white ${className}`}
  >
    <select aria-label={label} className="h-[17px] min-w-0 flex-1 appearance-none bg-transparent leading-[17px] outline-none">
      <option>{value}</option>
    </select>
    <span className={`flex h-[17px] w-4 shrink-0 items-center justify-center ${raised}`}>
      <Caret />
    </span>
  </div>
);

const ticks = Array.from({ length: 72 }, (_, i) => i + 1);

const HorizontalRuler = () => (
  <div className="h-[22px] pl-[18px]">
    <svg width="876" height="22" viewBox="0 0 876 22" fontSize="11" className="block">
      <path d="M6 4h869v14H6z" fill="#fff" />
      {ticks.map((t) =>
        t % 8 === 0 ? (
          <text key={t} x={6 + t * 12} y="15" textAnchor="middle">{t / 8}</text>
        ) : t % 8 === 4 ? (
          <path key={t} d={`M${5.5 + t * 12} 10v3`} stroke="#000" />
        ) : (
          <path key={t} d={`M${5 + t * 12} 11.500h1`} stroke="#000" />
        ),
      )}
      {ticks.slice(0, 18).map((t) => (
        <path key={t} d={`M${Math.round(3 + t * 47)} 18.500h5M${Math.round(5 + t * 47)}.5 16v3`} stroke="#222" />
      ))}
      <path d="M2 3h8v3L6.500 10.500 10 15v4H2v-4l3.500-4.500L2 6z" fill="#e4e2dd" stroke="#333" />
    </svg>
  </div>
);

const VerticalRuler = () => (
  <div className="w-[23px] shrink-0 pl-[3px]">
    <svg width="15" height="330" viewBox="0 0 15 330" fontSize="11" className="block">
      <path d="M0 2h15v328H0z" fill="#fff" />
      {ticks.slice(0, 27).map((t) =>
        t % 8 === 0 ? (
          <text key={t} transform={`translate(13 ${t * 12 + 2}) rotate(-90)`} textAnchor="middle">{t / 8}</text>
        ) : t % 8 === 4 ? (
          <path key={t} d={`M6 ${t * 12 + 0.5}h3`} stroke="#000" />
        ) : (
          <path key={t} d={`M7 ${t * 12 + 0.5}h1`} stroke="#000" />
        ),
      )}
    </svg>
  </div>
);

const fields = [
  { id: "nomor", label: "Nomor Urut", width: "w-[42px]" },
  { id: "tanggal", label: "Tanggal Kunjungan", width: "w-[109px]" },
  { id: "msisdn", label: "Msisdn", width: "w-[128px]" },
  { id: "nama", label: "Nama Pelanggan", width: "w-[257px]" },
  { id: "case", label: "Case", width: "w-[606px]" },
];

const FormCanvas = () => (
  <div className="relative min-w-0 flex-1 overflow-hidden border-t-2 border-l-2 border-black bg-[#ffcc99]">
    <svg className="absolute inset-0 h-full w-full" aria-hidden="true">
      <defs>
        <pattern id="dots" x="37" y="38" width="37.800" height="37.800" patternUnits="userSpaceOnUse">
          {[0, 1, 2, 3, 4, 5].map((i) => (
            <g key={i} fill="#b4b4b8">
              <rect x={i * 6.3} y="0" width="1" height="1" />
              <rect x="0" y={i * 6.3} width="1" height="1" />
            </g>
          ))}
        </pattern>
      </defs>
      <rect width="100%" height="100%" fill="url(#dots)" />
    </svg>
    <form className="relative pt-[35px] pl-9">
      {fields.map(({ id, label, width }) => (
        <div key={id} className="flex h-[34px] items-center">
          <label htmlFor={id} className="w-[113px] shrink-0">{label}</label>
          <input
            id={id}
            className={`h-7 border border-t-[#505050] border-r-white border-b-white border-l-[#505050] bg-[#dcdddf] shadow-[inset_1px_1px_0_#707070] ${width}`}
          />
        </div>
      ))}
      <div className="flex h-[34px] items-center">
        <label htmlFor="status" className="w-[114px] shrink-0">Status</label>
        <div className="relative flex h-[27px] w-[89px] border border-[#c3c3c3] bg-white">
          <select id="status" className="min-w-0 flex-1 appearance-none outline-none" />
          <span className={`flex w-4 items-center justify-center ${raised}`}><Caret /></span>
          <svg width="12" height="20" viewBox="0 0 12 20" className="absolute top-[10px] left-[58px]">
            <path d="M.5 1v15l3.500-3.500 3 6.500 2-1-3-6.500h5z" fill="#fff" stroke="#222" />
          </svg>
        </div>
      </div>
      <div className="flex h-[34px] items-center">
        <label htmlFor="petugas" className="w-[113px] shrink-0">Petugas</label>
        <div className="flex h-[26px] w-[120px] border-2 border-t-[#505050] border-r-white border-b-white border-l-[#505050] bg-[#dcdddf]">
          <select id="petugas" className="min-w-0 flex-1 appearance-none outline-none" />
          <span className={`flex w-4 items-center justify-center ${raised}`}><Caret /></span>
        </div>
      </div>
    </form>
  </div>
);

const ScrollBar = () => (
  <div className="flex w-[15px] shrink-0 flex-col border-l border-white">
    <button aria-label="Scroll up" className={`flex h-4 items-center justify-center ${raised}`}>
      <Caret className="rotate-180 text-[#808080]" />
    </button>
    <div className={`flex-1 ${raised}`} />
    <button aria-label="Scroll down" className={`flex h-4 items-center justify-center ${raised}`}>
      <Caret className="text-[#808080]" />
    </button>
    <button aria-label="Previous page" className={`flex h-4 flex-col items-center justify-center gap-px ${raised}`}>
      <Caret className="rotate-180" />
      <Caret className="rotate-180" />
    </button>
    <button aria-label="Navigation" className={`flex h-4 items-center justify-center ${raised}`}>
      <span className="h-[9px] w-[9px] rounded-full border-2 border-[#3d6d96] bg-[#86b4d8]" />
    </button>
    <button aria-label="Next page" className={`flex h-4 flex-col items-center justify-center gap-px ${raised}`}>
      <Caret />
      <Caret />
    </button>
  </div>
);

const SideDeck = () => (
  <aside className="flex w-10 shrink-0 flex-col items-center border border-t-[#808080] border-r-[#808080] border-b-[#808080] border-l-white pt-[14px]">
    <svg width="10" height="10" viewBox="0 0 10 10">
      <path d="M0 1h7M0 3.500h7M0 6h5" stroke="#3c5b73" />
      <path d="M4 6h6L7 10z" fill="#1d2c39" />
    </svg>
    <div className="mt-3 mb-2 h-px w-6 bg-[#aaa8a2]" />
    <div className="flex flex-col gap-3">
      {[
        <g key="properties">
          <path d="M1 6l5-2 4 1v5H1zM1 11h9v8l-4-1-5-2z" fill="#2f86cc" />
          <path d="M7 3l6-2 4 1v3l-6 1z" fill="#5aa7dc" />
          <path d="M11 7l5-2 5 1v9l-5 5-9-1v-7h4z" fill="#9ccc2e" />
          <path d="M1 11h9M11 11.500h10M14 12v8M6 5v12M16 5v6" stroke="#e3f0f8" />
        </g>,
        <g key="styles">
          <path d="M4 20l4-12q6 0 9 8z" fill="#2d77bd" stroke="#1c4a75" />
          <ellipse cx="12" cy="11" rx="5" ry="4" fill="#142c44" transform="rotate(35 12 11)" />
          <path d="M3 6q4-6 7 0" fill="none" stroke="#d8541c" strokeWidth="3" />
          <path d="M17 1l1 3 3 1-3 1-1 3-1-3-3-1 3-1z" fill="#f5b63c" />
          <circle cx="18" cy="17" r="3" fill="#a4c639" />
          <circle cx="20" cy="11" r="2" fill="#e9762a" />
        </g>,
        <g key="gallery">
          <path d="M1 6l14-5 6 13-14 7z" fill="#fff" stroke="#8a9aa6" strokeDasharray="2 1" />
          <path d="M3 8l11-4 5 9-12 5z" fill="#9bc33b" />
          <path d="M5 9l9-3 3 6-9 4z" fill="#3f8fd0" />
          <path d="M6 11l4-2 5 2-7 3z" fill="#d8ecf8" />
        </g>,
        <g key="navigator">
          <circle cx="11" cy="11" r="9.500" fill="#f8fafb" stroke="#f09a1a" strokeWidth="2.500" />
          <path d="M9 7V3l3 4V3" fill="none" stroke="#2c4258" />
          <path d="M16 6l-3 7-4-4z" fill="#d8432a" />
          <path d="M6 17l3-8 4 4z" fill="#2d77bd" />
        </g>,
      ].map((art) => (
        <button key={art.key} aria-label={String(art.key)} className="h-[23px]">
          <svg width="23" height="23" viewBox="0 0 22 22">{art}</svg>
        </button>
      ))}
    </div>
  </aside>
);

const menus = ["_File", "_Edit", "_View", "_Insert", "F_ormat", "T_able", "_Tools", "_Window", "_Help"];

const standardTools = "doc v open v save mail | edit | pdf print preview | check +abc | cut copy paste v brush | undo v redo u | globe table v +draw | find compass gallery db para zoom | help".split(" ");
const formatTools = "bold italic underline | +left center right justify | numbers bullets outdent indent | color v highlight v bucket v".split(" ");
const controlTools = "pointer +design control form checkbox textbox numeric pushbutton radio listbox combobox label more +designForm +wizard".split(" ");
const designTools = "pointer +design | control form | navigator field order | openDesign autofocus | size anchor u | align u | +grid +snap guides".split(" ");
const drawTools = "pointer | line rect ellipse freehand text callout | diamond v smile v arrows v flow v bubble v star v | points | fontwork shapes | extrude".split(" ");

const bar = "flex w-fit shrink-0 items-center bg-linear-to-b from-[#f8f7f5] to-[#dbd8d1]";

const FormWindow = () => (
  <section className="absolute top-[90px] left-[171px] flex h-[525px] w-[1024px] flex-col border-2 border-t-white border-r-[#606060] border-b-[#505050] border-l-white bg-[#d4d0c8] pt-[2px] pr-[2px]">
    <header className="flex h-[18px] shrink-0 items-center justify-between bg-linear-to-r from-[#808080] to-[#c0c0c0] pr-px pl-1">
      <h2 className="flex items-center font-bold text-[#d4d0c8]">
        <Icon name="doc" />
        Customer Visit.odb : Tbl_CustVisit - OpenOffice Base: Database Form
      </h2>
      <WindowButtons />
    </header>
    <div className="shrink-0 bg-linear-to-r from-[#d4d0c8] to-[#f8f8f6]">
      <nav className="flex h-5 items-center gap-3 pt-[2px] pl-[5px]">
        {menus.map((menu) => (
          <button key={menu}><Access text={menu} /></button>
        ))}
      </nav>
      <div className={`h-[27px] ${bar}`}>
        <Grip />
        <Tools items={standardTools} />
        <span className="w-[6px]" />
        <Overflow />
      </div>
      <div className={`h-7 ${bar}`}>
        <Grip />
        <Tools items={["styles"]} />
        <div className="flex gap-[9px] pr-2 pl-[9px]">
          <PickList label="Style" value="Default" className="w-[130px]" />
          <PickList label="Font" value="Times New Roman" className="w-[145px]" />
          <PickList label="Size" value="12" className="w-[58px]" />
        </div>
        <Tools items={formatTools} />
        <span className="w-[6px]" />
        <Overflow />
      </div>
    </div>
    <div className="flex min-h-0 flex-1">
      <div className="flex w-10 shrink-0 flex-col items-center bg-linear-to-r from-[#f8f7f5] to-[#cfccc4] pr-[2px]">
        <div className="mt-[3px] mb-[4px] h-0 w-6 border-t-2 border-dotted border-[#808080]" />
        <Tools items={controlTools} />
        <button aria-label="More controls" className="mt-[7px] flex h-[10px] w-8 items-center justify-end bg-linear-to-r from-[#c4c1b9] to-[#808080] pr-1">
          <Caret className="-rotate-90" />
        </button>
      </div>
      <div className="flex min-w-0 flex-1 border-t-2 border-l-2 border-[#555]">
        <div className="flex min-w-0 flex-1 flex-col">
          <HorizontalRuler />
          <div className="flex min-h-0 flex-1">
            <VerticalRuler />
            <FormCanvas />
          </div>
        </div>
        <ScrollBar />
      </div>
      <div className="flex w-2 shrink-0 items-center justify-center border-r border-l border-[#808080]">
        <div className="h-8 w-0 border-l-2 border-dotted border-[#222]" />
      </div>
      <SideDeck />
    </div>
    <div className="flex h-[29px] shrink-0 border-t border-b border-t-[#bdbab3] border-b-[#808080] bg-[#f8f8f6]">
      <div className={bar}>
        <Grip />
        <Tools items={designTools} />
        <span className="w-[6px]" />
        <Overflow />
        <Grip />
        <Tools items={drawTools} />
        <span className="w-[6px]" />
        <Overflow />
      </div>
    </div>
    <footer className="flex h-[23px] shrink-0 items-center">
      <span className="w-[161px] pl-[10px]">Page 1 / 1</span>
      <Divider />
      <span className="w-[140px] pl-[3px]">Default</span>
      <Divider />
      <span className="w-[168px] pr-1 text-center">English (USA)</span>
      <Divider />
      <span className="w-[41px] pl-[3px]">INSRT</span>
      <Divider />
      <span className="w-[30px] pl-[3px]">EXT</span>
      <Divider />
      <span className="w-[14px] pl-[2px]">*</span>
      <Divider />
      <span className="w-[27px]" />
      <Divider />
      <span className="flex-1" />
      <Divider />
      <div className="flex items-center gap-[5px] px-1">
        <button aria-label="Zoom out" className="flex h-[11px] w-[11px] items-center justify-center rounded-full border border-[#3d5d7a] bg-[#dbe8f3]">
          <span className="h-px w-[5px] bg-[#1d3c59]" />
        </button>
        <input
          type="range"
          aria-label="Zoom"
          className="h-3 w-[98px] appearance-none bg-transparent [&::-webkit-slider-runnable-track]:h-[3px] [&::-webkit-slider-runnable-track]:border-t-2 [&::-webkit-slider-runnable-track]:border-b [&::-webkit-slider-runnable-track]:border-t-[#808080] [&::-webkit-slider-runnable-track]:border-b-white [&::-webkit-slider-thumb]:-mt-[5px] [&::-webkit-slider-thumb]:h-[9px] [&::-webkit-slider-thumb]:w-2 [&::-webkit-slider-thumb]:appearance-none [&::-webkit-slider-thumb]:rounded-full [&::-webkit-slider-thumb]:border [&::-webkit-slider-thumb]:border-[#2c4258] [&::-webkit-slider-thumb]:bg-[#4f86ad]"
        />
        <button aria-label="Zoom in" className="flex h-[11px] w-[11px] items-center justify-center rounded-full border border-[#3d5d7a] bg-[#dbe8f3]">
          <svg width="5" height="5" viewBox="0 0 5 5"><path d="M0 2.500h5M2.500 0v5" stroke="#1d3c59" /></svg>
        </button>
      </div>
      <span className="w-[6px]" />
      <Divider />
      <span className="w-[43px] pl-[2px]">100 %</span>
    </footer>
  </section>
);

const Recorder = () => (
  <section className="flex h-8 shrink-0 border-t border-[#eee] bg-[#fdfdfd]">
    <div className="flex w-3 flex-col gap-[9px] pt-2">
      <span className="h-px w-[6px] bg-[#777]" />
      <svg width="6" height="10" viewBox="0 0 6 10"><path d="M5 0L0 5l5 5" fill="none" stroke="#555" /></svg>
    </div>
    <h2 className="pl-1 font-['Noto_Sans',sans-serif] text-[11px] leading-4 text-[#555]">ScreenToGif</h2>
    <div className="ml-auto flex items-center pr-1">
      <svg width="18" height="20" viewBox="0 0 18 20" fill="none" stroke="#7d7d7d">
        <circle cx="6" cy="13" r="3.500" strokeWidth="2.500" />
        <circle cx="6" cy="13" r="5" strokeWidth="1.500" strokeDasharray="2 1.930" />
        <circle cx="13" cy="5" r="2.500" strokeWidth="2" />
        <circle cx="13" cy="5" r="3.800" strokeWidth="1.200" strokeDasharray="1.500 1.480" />
      </svg>
      <span className="mr-2 ml-[10px] h-7 w-px bg-[#ddd]" />
      <label className="flex items-center gap-[3px] text-xs">
        <span className="flex h-[25px] w-[45px] items-center border border-[#bbb] bg-white">
          <input defaultValue="15" className="w-[23px] pl-[5px] text-[11px] text-[#777]" />
          <span className="h-px flex-1 bg-[#c8dbe9]" />
        </span>
        fps
      </label>
      <span className="mx-[7px] h-7 w-px bg-[#ddd]" />
      <button className="flex items-center gap-[5px]">
        <span className="h-4 w-[13px] border-r-[5px] border-l-[5px] border-[#2f7fc8]" />
        <span className="text-right leading-[9px]">Pause<br /><small className="text-[9px] text-[#555]">F7</small></span>
      </button>
      <button className="ml-[5px] flex items-center gap-1">
        <span className="h-4 w-4 bg-[#2f7fc8]" />
        <span className="text-right leading-[9px]">Stop<br /><small className="text-[9px] text-[#555]">F8</small></span>
      </button>
    </div>
  </section>
);

const taskButton = `flex h-[38px] w-12 items-center justify-center ${raised}`;

const Taskbar = () => (
  <footer className="flex h-11 shrink-0 items-center border-t border-[#bbb] bg-[#d4d0c8] pr-[2px] pl-[2px]">
    <button className={`flex h-[38px] w-[52px] items-center justify-center gap-px font-bold ${raised}`}>
      <svg width="16" height="15" viewBox="0 0 16 15">
        <path d="M2 2q3-2 6-1L7 7Q4 5 1 7z" fill="#e0532a" />
        <path d="M9 2q3 2 6 0l-1 5q-3 2-6 0z" fill="#7cb342" />
        <path d="M1 8q3-2 6 0l-1 5q-3-2-6 0z" fill="#3f8fd0" />
        <path d="M8 8q3 2 6 0l-1 5q-3 2-6 0z" fill="#f5bd2c" />
      </svg>
      Start
    </button>
    <div className="ml-[9px] flex gap-[2px]">
      <button aria-label="Explorer" className={taskButton}>
        <svg width="32" height="32" viewBox="0 0 32 32">
          <path d="M1 6l3-3h8l2 3h16v23H1z" fill="#f0cf72" stroke="#c9a040" />
          <path d="M4 4h6v3H4z" fill="#2f8a55" />
          <path d="M12 6h6v3h-6z" fill="#d8541c" />
          <path d="M18 7h8v3h-8z" fill="#3f8fd0" />
          <path d="M1 10h30v19H1z" fill="#fae6a4" stroke="#d5b050" />
          <path d="M5 31V20h22v11h-5v-6H10v6z" fill="#a5d4f0" stroke="#3f8fd0" />
          <path d="M8 13l1 5 5 1-5 1-1 5-1-5-5-1 5-1z" fill="#fff" />
        </svg>
      </button>
      <button aria-label="Chrome" className={taskButton}>
        <svg width="30" height="30" viewBox="0 0 30 30">
          <circle cx="15" cy="15" r="14.500" fill="#f6c324" />
          <path d="M15 15L2.500 7.700A14.500 14.500 0 0 1 28 8.500H15z" fill="#cf4a26" />
          <path d="M15 15l-12.500-7.300A14.500 14.500 0 0 0 14 29.500L20 18z" fill="#2f7f5a" />
          <circle cx="15" cy="15" r="6.500" fill="#fff" />
          <circle cx="15" cy="15" r="5.300" fill="#3c7de0" />
        </svg>
      </button>
      <button aria-label="OpenOffice Base" className={taskButton}>
        <svg width="32" height="32" viewBox="0 0 32 32">
          <path d="M0 0h32v10l-3 6 2 16H0z" fill="#d5582a" />
          <path d="M0 0h14v12l-4 4 2 16H0z" fill="#2a5a78" />
          <path d="M14 0h18v10L12 13z" fill="#e8b98a" />
          <path d="M0 0h20l-6 6-14 4z" fill="#8a9499" />
          <path d="M1 10q8-6 20-5-9 0-15 6zM3 5q7-4 15-3-8 0-12 5z" fill="#fff" />
          <rect x="11" y="13" width="11" height="15" rx="4" fill="none" stroke="#f6b98a" strokeWidth="2.500" />
          <path d="M11 20h11" stroke="#f6b98a" strokeWidth="2.500" />
        </svg>
        <span className="ml-[3px] h-full w-[3px] border-r border-l border-r-white border-l-[#404040]" />
      </button>
      <button aria-label="ScreenToGif" className="flex h-[38px] w-12 items-center justify-center border-2 border-t-[#404040] border-r-white border-b-white border-l-[#404040] bg-white">
        <svg width="32" height="26" viewBox="0 0 32 26" fill="none" stroke="#6e6e6e">
          <path d="M1 1.500h30v18H1z" strokeWidth="2" />
          <path d="M12.500 7v3M19.500 7v3M12 13q4 4 8 0" strokeWidth="1.300" />
          <path d="M16 20v3M8 24.500h16" strokeWidth="3" />
        </svg>
      </button>
    </div>
    <div className="ml-auto flex h-[37px] items-center border border-t-[#808080] border-r-white border-b-white border-l-[#808080] pr-[2px] pl-[6px]">
      <svg width="152" height="18" viewBox="0 0 152 18" fill="none" stroke="#777">
        <path d="M0 8l2.500-2.500L5 8M0 12l2.500-2.500L5 12" stroke="#000" strokeWidth="1.500" />
        <path d="M20 14h11q2-1 1-4-1-3-4-3-2-4-6-2-2 1-2 3-4 0-4 3 0 3 4 3z" fill="#fff" />
        <path d="M44 7v5h10V7" />
        <path d="M40 3h7v5h-7z" fill="#d8541c" stroke="none" />
        <path d="M51 3h6v5h-6z" fill="#2f7f5a" stroke="none" />
        <path d="M46 11h6v4h-6z" fill="#3f8fd0" stroke="none" />
        <path d="M67 15h11q2-1 1-4-1-3-4-3-2-5-6-3-2 1-2 4-4 0-4 3 0 3 4 3z" fill="#fff" stroke="#3f7fd0" />
        <path d="M71 14V9M68.500 11l2.500-3 2.500 3" stroke="#2468c4" strokeWidth="2" />
        <path d="M92 2l4 2.500L92 7l-4-2.500zM100 2l4 2.500L100 7l-4-2.500zM92 7l4 2.500L92 12l-4-2.500zM100 7l4 2.500-4 2.500-4-2.500zM92 13l4 3 4-3" fill="#fff" />
        <path d="M112.500 13h2v2h-2zM115.500 11h2v4h-2zM118.500 9h2v6h-2zM121.500 6h2v9h-2zM124.500 3h2v12h-2z" fill="#fff" />
        <path d="M136 7h3l4-4v12l-4-4h-3zM145 6q2 3 0 6M147 4q4 5 0 10M149 2q5 7 0 14" fill="#f5f5f5" />
      </svg>
      <p className="w-[66px] pl-2 text-center leading-4">
        11:19 AM
        <br />
        12/16/2017
      </p>
      <svg width="16" height="14" viewBox="0 0 16 14" className="shrink-0">
        <path d="M0 0h16v11H0z" fill="#2468b4" />
        <path d="M0 8h16v4H0z" fill="#173c68" />
        <path d="M2 9l3-1 1 4z" fill="#f5bd2c" />
      </svg>
    </div>
  </footer>
);

export default function App() {
  return (
    <main className="flex h-screen w-full flex-col overflow-hidden bg-[#d4d0c8] font-['DejaVu_Sans_Condensed','DejaVu_Sans',sans-serif] text-[11px] leading-[14px] whitespace-nowrap text-black">
      <div className="relative flex min-h-0 flex-1 flex-col overflow-hidden">
        <Explorer />
        <div className="absolute top-[141px] right-0 h-[23px] w-[200px] border-r-2 border-b-2 border-[#404040] bg-[#d4d0c8]" />
        <BaseWindow />
        <FormWindow />
      </div>
      <Recorder />
      <Taskbar />
    </main>
  );
}
